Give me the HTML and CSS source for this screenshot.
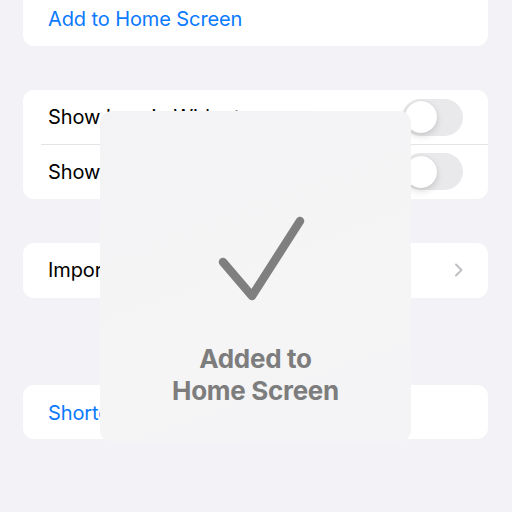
FILE: index.html
```html
<!DOCTYPE html>
<html>
<head>
<meta charset="utf-8">
<link rel="stylesheet" href="styles.css">
</head>
<body>
<div class="page">
  <div class="card card-first">
    <div class="row"><span class="link">Add to Home Screen</span></div>
  </div>
  <div class="card">
    <div class="row sep"><span class="label">Show Icon in Widget</span><span class="toggle"><span class="knob"></span></span></div>
    <div class="row"><span class="label">Show in Share Sheet</span><span class="toggle"><span class="knob"></span></span></div>
  </div>
  <div class="card">
    <div class="row"><span class="label">Import Questions</span>
      <svg class="chev" width="10" height="14" viewBox="0 0 10 14"><path d="M2 1.5 L7.5 7 L2 12.5" fill="none" stroke="#bfbfc3" stroke-width="2" stroke-linecap="round" stroke-linejoin="round"/></svg>
    </div>
  </div>
  <div class="card card-last">
    <div class="row"><span class="link">Shortcut Details</span></div>
  </div>
</div>
<div class="hud">
  <svg class="check" width="100" height="100" viewBox="0 0 100 100"><path d="M14 47 L43 81 L91 6" fill="none" stroke="#7f7f7f" stroke-width="8.5" stroke-linecap="round" stroke-linejoin="round"/></svg>
  <div class="hud-text">Added to<br>Home Screen</div>
</div>
</body>
</html>
```
FILE: styles.css
```css
html, body {
  margin: 0;
  padding: 0;
  background: #f2f2f7;
  font-family: Inter, "Liberation Sans", sans-serif;
}
.page {
  width: 512px;
  height: 512px;
  overflow: hidden;
  display: flex;
  flex-direction: column;
  padding: 0 24px 0 23px;
  box-sizing: border-box;
  position: relative;
}
.card {
  background: #ffffff;
  border-radius: 11px;
  margin-top: 44px;
}
.card-first { margin-top: -8px; }
.card-first .row { height: 54px; }
.card-last { margin-top: 87px; }
.card-last .row { padding-top: 2px; box-sizing: border-box; }
.row {
  height: 54.5px;
  display: flex;
  align-items: center;
  padding: 0 24px 0 25px;
  font-size: 20px;
  letter-spacing: -0.1px;
  color: #000;
  position: relative;
}
.row.sep::after {
  content: "";
  position: absolute;
  left: 18px;
  right: 0;
  bottom: 0;
  height: 1px;
  background: #e3e3e8;
}
.link { color: #0a7aff; }
.label { flex: 1; }
.toggle {
  margin-left: auto;
  width: 61px;
  height: 37px;
  border-radius: 19px;
  background: #e9e9eb;
  position: relative;
  margin-right: 1px;
}
.knob {
  position: absolute;
  left: 2.5px;
  top: 2.5px;
  width: 32px;
  height: 32px;
  border-radius: 50%;
  background: #fff;
  box-shadow: 0 3px 7px rgba(0,0,0,0.15), 0 0 1px rgba(0,0,0,0.12);
}
.chev { margin-left: auto; margin-right: 0px; }
.hud {
  position: absolute;
  left: 100px;
  top: 111px;
  width: 311px;
  height: 331px;
  border-radius: 12px;
  background: linear-gradient(160deg, #f3f3f5 0%, #f5f5f6 60%, #f4f4f6 100%);
  display: flex;
  flex-direction: column;
  align-items: center;
  box-sizing: border-box;
  padding-top: 104px;
}
.check { margin-left: 6px; }
.hud-text {
  margin-top: 28px;
  font-weight: 700;
  font-size: 26px;
  line-height: 32px;
  color: #7d7d7d;
  text-align: center;
  letter-spacing: -0.3px;
}
```
